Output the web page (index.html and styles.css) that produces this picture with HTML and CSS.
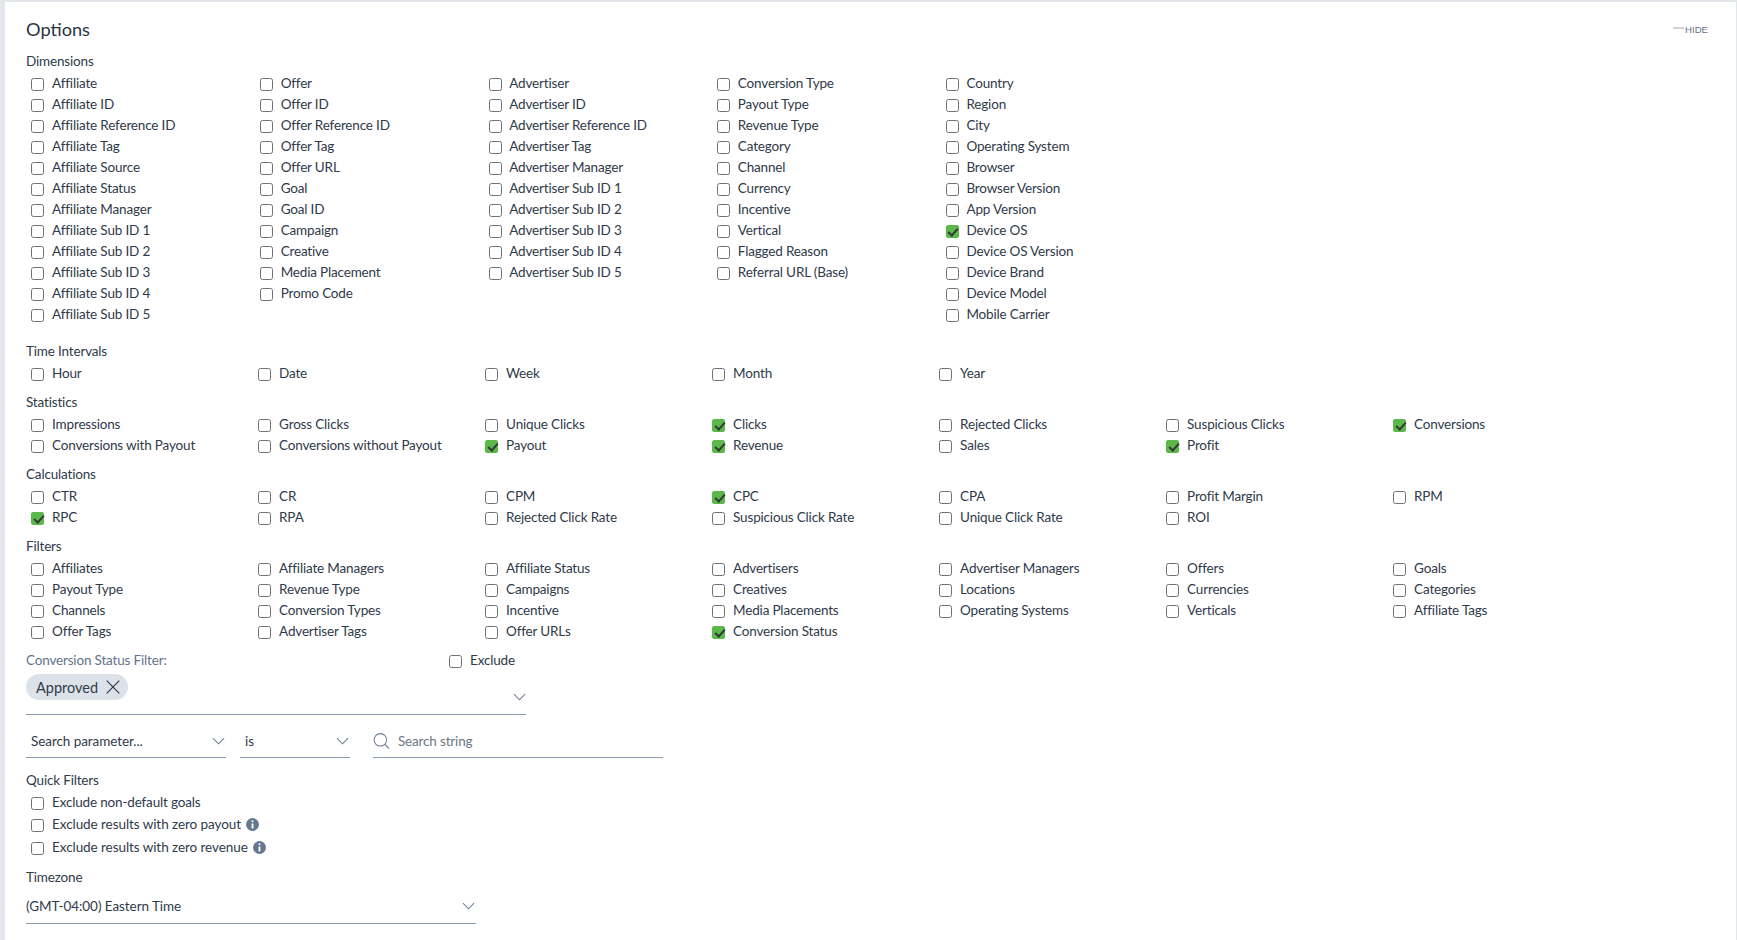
FILE: index.html
```html
<!DOCTYPE html>
<html lang="en">
<head>
<meta charset="utf-8">
<title>Options</title>
<link rel="stylesheet" href="styles.css">
</head>
<body>
<main class="card">
  <header class="card-head">
    <h1 class="title">Options</h1>
    <button class="hide" type="button"><span class="hide-dash"></span>HIDE</button>
  </header>

  <section class="section section-dims">
    <h2 class="label">Dimensions</h2>
    <div class="grid-dims">
      <div class="col">
        <label class="opt"><input type="checkbox">Affiliate</label>
        <label class="opt"><input type="checkbox">Affiliate ID</label>
        <label class="opt"><input type="checkbox">Affiliate Reference ID</label>
        <label class="opt"><input type="checkbox">Affiliate Tag</label>
        <label class="opt"><input type="checkbox">Affiliate Source</label>
        <label class="opt"><input type="checkbox">Affiliate Status</label>
        <label class="opt"><input type="checkbox">Affiliate Manager</label>
        <label class="opt"><input type="checkbox">Affiliate Sub ID 1</label>
        <label class="opt"><input type="checkbox">Affiliate Sub ID 2</label>
        <label class="opt"><input type="checkbox">Affiliate Sub ID 3</label>
        <label class="opt"><input type="checkbox">Affiliate Sub ID 4</label>
        <label class="opt"><input type="checkbox">Affiliate Sub ID 5</label>
      </div>
      <div class="col">
        <label class="opt"><input type="checkbox">Offer</label>
        <label class="opt"><input type="checkbox">Offer ID</label>
        <label class="opt"><input type="checkbox">Offer Reference ID</label>
        <label class="opt"><input type="checkbox">Offer Tag</label>
        <label class="opt"><input type="checkbox">Offer URL</label>
        <label class="opt"><input type="checkbox">Goal</label>
        <label class="opt"><input type="checkbox">Goal ID</label>
        <label class="opt"><input type="checkbox">Campaign</label>
        <label class="opt"><input type="checkbox">Creative</label>
        <label class="opt"><input type="checkbox">Media Placement</label>
        <label class="opt"><input type="checkbox">Promo Code</label>
      </div>
      <div class="col">
        <label class="opt"><input type="checkbox">Advertiser</label>
        <label class="opt"><input type="checkbox">Advertiser ID</label>
        <label class="opt"><input type="checkbox">Advertiser Reference ID</label>
        <label class="opt"><input type="checkbox">Advertiser Tag</label>
        <label class="opt"><input type="checkbox">Advertiser Manager</label>
        <label class="opt"><input type="checkbox">Advertiser Sub ID 1</label>
        <label class="opt"><input type="checkbox">Advertiser Sub ID 2</label>
        <label class="opt"><input type="checkbox">Advertiser Sub ID 3</label>
        <label class="opt"><input type="checkbox">Advertiser Sub ID 4</label>
        <label class="opt"><input type="checkbox">Advertiser Sub ID 5</label>
      </div>
      <div class="col">
        <label class="opt"><input type="checkbox">Conversion Type</label>
        <label class="opt"><input type="checkbox">Payout Type</label>
        <label class="opt"><input type="checkbox">Revenue Type</label>
        <label class="opt"><input type="checkbox">Category</label>
        <label class="opt"><input type="checkbox">Channel</label>
        <label class="opt"><input type="checkbox">Currency</label>
        <label class="opt"><input type="checkbox">Incentive</label>
        <label class="opt"><input type="checkbox">Vertical</label>
        <label class="opt"><input type="checkbox">Flagged Reason</label>
        <label class="opt"><input type="checkbox">Referral URL (Base)</label>
      </div>
      <div class="col">
        <label class="opt"><input type="checkbox">Country</label>
        <label class="opt"><input type="checkbox">Region</label>
        <label class="opt"><input type="checkbox">City</label>
        <label class="opt"><input type="checkbox">Operating System</label>
        <label class="opt"><input type="checkbox">Browser</label>
        <label class="opt"><input type="checkbox">Browser Version</label>
        <label class="opt"><input type="checkbox">App Version</label>
        <label class="opt"><input type="checkbox" checked>Device OS</label>
        <label class="opt"><input type="checkbox">Device OS Version</label>
        <label class="opt"><input type="checkbox">Device Brand</label>
        <label class="opt"><input type="checkbox">Device Model</label>
        <label class="opt"><input type="checkbox">Mobile Carrier</label>
      </div>
    </div>
  </section>

  <section class="section">
    <h2 class="label">Time Intervals</h2>
    <div class="grid-seven">
      <label class="opt"><input type="checkbox">Hour</label>
      <label class="opt"><input type="checkbox">Date</label>
      <label class="opt"><input type="checkbox">Week</label>
      <label class="opt"><input type="checkbox">Month</label>
      <label class="opt"><input type="checkbox">Year</label>
    </div>
  </section>

  <section class="section">
    <h2 class="label">Statistics</h2>
    <div class="grid-seven">
      <label class="opt"><input type="checkbox">Impressions</label>
      <label class="opt"><input type="checkbox">Gross Clicks</label>
      <label class="opt"><input type="checkbox">Unique Clicks</label>
      <label class="opt"><input type="checkbox" checked>Clicks</label>
      <label class="opt"><input type="checkbox">Rejected Clicks</label>
      <label class="opt"><input type="checkbox">Suspicious Clicks</label>
      <label class="opt"><input type="checkbox" checked>Conversions</label>
      <label class="opt"><input type="checkbox">Conversions with Payout</label>
      <label class="opt"><input type="checkbox">Conversions without Payout</label>
      <label class="opt"><input type="checkbox" checked>Payout</label>
      <label class="opt"><input type="checkbox" checked>Revenue</label>
      <label class="opt"><input type="checkbox">Sales</label>
      <label class="opt"><input type="checkbox" checked>Profit</label>
    </div>
  </section>

  <section class="section">
    <h2 class="label">Calculations</h2>
    <div class="grid-seven">
      <label class="opt"><input type="checkbox">CTR</label>
      <label class="opt"><input type="checkbox">CR</label>
      <label class="opt"><input type="checkbox">CPM</label>
      <label class="opt"><input type="checkbox" checked>CPC</label>
      <label class="opt"><input type="checkbox">CPA</label>
      <label class="opt"><input type="checkbox">Profit Margin</label>
      <label class="opt"><input type="checkbox">RPM</label>
      <label class="opt"><input type="checkbox" checked>RPC</label>
      <label class="opt"><input type="checkbox">RPA</label>
      <label class="opt"><input type="checkbox">Rejected Click Rate</label>
      <label class="opt"><input type="checkbox">Suspicious Click Rate</label>
      <label class="opt"><input type="checkbox">Unique Click Rate</label>
      <label class="opt"><input type="checkbox">ROI</label>
    </div>
  </section>

  <section class="section">
    <h2 class="label">Filters</h2>
    <div class="grid-seven">
      <label class="opt"><input type="checkbox">Affiliates</label>
      <label class="opt"><input type="checkbox">Affiliate Managers</label>
      <label class="opt"><input type="checkbox">Affiliate Status</label>
      <label class="opt"><input type="checkbox">Advertisers</label>
      <label class="opt"><input type="checkbox">Advertiser Managers</label>
      <label class="opt"><input type="checkbox">Offers</label>
      <label class="opt"><input type="checkbox">Goals</label>
      <label class="opt"><input type="checkbox">Payout Type</label>
      <label class="opt"><input type="checkbox">Revenue Type</label>
      <label class="opt"><input type="checkbox">Campaigns</label>
      <label class="opt"><input type="checkbox">Creatives</label>
      <label class="opt"><input type="checkbox">Locations</label>
      <label class="opt"><input type="checkbox">Currencies</label>
      <label class="opt"><input type="checkbox">Categories</label>
      <label class="opt"><input type="checkbox">Channels</label>
      <label class="opt"><input type="checkbox">Conversion Types</label>
      <label class="opt"><input type="checkbox">Incentive</label>
      <label class="opt"><input type="checkbox">Media Placements</label>
      <label class="opt"><input type="checkbox">Operating Systems</label>
      <label class="opt"><input type="checkbox">Verticals</label>
      <label class="opt"><input type="checkbox">Affiliate Tags</label>
      <label class="opt"><input type="checkbox">Offer Tags</label>
      <label class="opt"><input type="checkbox">Advertiser Tags</label>
      <label class="opt"><input type="checkbox">Offer URLs</label>
      <label class="opt"><input type="checkbox" checked>Conversion Status</label>
    </div>
  </section>

  <section class="section">
    <div class="status-head">
      <span class="status-label">Conversion Status Filter:</span>
      <label class="opt"><input type="checkbox">Exclude</label>
    </div>
    <div class="multi">
      <span class="chip">Approved
        <svg class="chip-x" viewBox="0 0 14 14" aria-hidden="true"><path d="M.7.7l12.6 12.6M13.3.7L.7 13.3"/></svg>
      </span>
      <svg class="chev multi-chev" viewBox="0 0 14 8" aria-hidden="true"><path d="M1 1l6 6 6-6"/></svg>
    </div>
  </section>

  <div class="search-row">
    <div class="select select-param">
      <span>Search parameter...</span>
      <svg class="chev" viewBox="0 0 14 8" aria-hidden="true"><path d="M1 1l6 6 6-6"/></svg>
    </div>
    <div class="select select-op">
      <span>is</span>
      <svg class="chev" viewBox="0 0 14 8" aria-hidden="true"><path d="M1 1l6 6 6-6"/></svg>
    </div>
    <div class="search">
      <svg class="search-icon" viewBox="0 0 18 18" aria-hidden="true"><circle cx="7.8" cy="7.8" r="6.6"/><path d="M12.6 12.6l4.4 4.4"/></svg>
      <span class="placeholder">Search string</span>
    </div>
  </div>

  <section class="section section-quick">
    <h2 class="label">Quick Filters</h2>
    <label class="opt"><input type="checkbox">Exclude non-default goals</label>
    <label class="opt opt-tall"><input type="checkbox">Exclude results with zero payout
      <svg class="info" viewBox="0 0 14 14" aria-hidden="true"><circle class="info-bg" cx="7" cy="7" r="7"/><circle class="info-fg" cx="7" cy="3.6" r="1.1"/><rect class="info-fg" x="6" y="5.8" width="2" height="5.4" rx=".5"/></svg>
    </label>
    <label class="opt opt-tall"><input type="checkbox">Exclude results with zero revenue
      <svg class="info" viewBox="0 0 14 14" aria-hidden="true"><circle class="info-bg" cx="7" cy="7" r="7"/><circle class="info-fg" cx="7" cy="3.6" r="1.1"/><rect class="info-fg" x="6" y="5.8" width="2" height="5.4" rx=".5"/></svg>
    </label>
  </section>

  <section class="section section-tz">
    <h2 class="label">Timezone</h2>
    <div class="select select-tz">
      <span>(GMT-04:00) Eastern Time</span>
      <svg class="chev" viewBox="0 0 14 8" aria-hidden="true"><path d="M1 1l6 6 6-6"/></svg>
    </div>
  </section>
</main>
</body>
</html>
```
FILE: styles.css
```css
* { box-sizing: border-box; }
html, body { height: 100%; }
body {
  margin: 0;
  padding: 2px 1px 0 5px;
  background: #e3e7eb;
  overflow: hidden;
  font-family: "Lato", "Noto Sans", sans-serif;
  font-size: 13.5px;
  letter-spacing: -0.17px;
  color: #2f3a4a;
}
.card {
  background: #fff;
  height: 100%;
  padding: 15px 0 0 21px;
}
.card-head {
  display: flex;
  justify-content: space-between;
  align-items: center;
  height: 24px;
  margin-bottom: 10px;
}
.title {
  margin: 0;
  font-size: 18.2px;
  font-weight: 400;
  letter-spacing: 0;
  line-height: 23px;
  color: #2a3442;
}
.hide {
  display: flex;
  align-items: center;
  gap: 1.5px;
  margin: 0 28px 0 0;
  padding: 0;
  border: 0;
  background: none;
  font-family: "Liberation Sans", sans-serif;
  font-size: 9.6px;
  letter-spacing: 0;
  color: #6b7485;
}
.hide-dash {
  display: block;
  width: 11px;
  height: 2px;
  background: #d0d4d9;
  position: relative;
  top: -1px;
}
.section { margin-bottom: 8px; }
.section-dims { margin-bottom: 16px; }
.label {
  margin: 0 0 1px;
  font-size: 13.5px;
  font-weight: 400;
  line-height: 21px;
  color: #2f3a4a;
}
.grid-dims {
  display: grid;
  grid-template-columns: repeat(5, 228.6px);
}
.col { display: flex; flex-direction: column; }
.grid-seven {
  display: grid;
  grid-template-columns: repeat(7, 227px);
}
.opt {
  display: flex;
  align-items: center;
  height: 21px;
  padding-left: 5.4px;
  padding-bottom: 1px;
  white-space: nowrap;
}
.opt input {
  appearance: none;
  -webkit-appearance: none;
  flex: none;
  position: relative;
  width: 13px;
  height: 13px;
  margin: 2px 7.7px 0 0;
  border: 1px solid #6f7277;
  border-radius: 2.5px;
  background: #fff;
}
.opt input:checked {
  background: #5cb84a;
  border-color: #5cb84a;
  border-radius: 2px;
}
.opt input:checked::after {
  content: "";
  position: absolute;
  left: 3.4px;
  top: 0.4px;
  width: 4px;
  height: 8px;
  border: solid #2f3a33;
  border-width: 0 2px 2px 0;
  transform: rotate(42deg);
}
.status-head { display: flex; align-items: center; height: 21px; }
.status-label { width: 418px; color: #64748b; padding-bottom: 1px; }
.multi {
  position: relative;
  width: 500px;
  height: 44px;
  padding-top: 3px;
  border-bottom: 1px solid #8c9cb1;
}
.chip {
  display: inline-flex;
  align-items: center;
  gap: 8px;
  height: 26px;
  padding: 0 8px 0 10px;
  border-radius: 13px;
  background: #dde2e8;
  font-size: 14.5px;
  letter-spacing: 0;
}
.chip-x { width: 14px; height: 14px; }
.chip-x path { fill: none; stroke: #2f3a4a; stroke-width: 1.2; }
.chev { width: 13px; height: 8px; flex: none; }
.chev path { fill: none; stroke: #6b7a8f; stroke-width: 1.1; }
.multi-chev { position: absolute; right: 0; top: 22px; }
.search-row {
  display: flex;
  height: 33px;
  margin: 10px 0 12px;
}
.select {
  display: flex;
  align-items: center;
  justify-content: space-between;
  letter-spacing: -0.07px;
  border-bottom: 1px solid #8c9cb1;
}
.select-param { width: 200px; padding: 0 1px 0 5px; margin-right: 14px; }
.select-op { width: 110px; padding: 0 1px 0 5px; margin-right: 23px; }
.search {
  display: flex;
  align-items: center;
  gap: 8px;
  width: 290px;
  border-bottom: 1px solid #8c9cb1;
}
.search-icon { width: 17px; height: 18px; flex: none; }
.search-icon circle, .search-icon path { fill: none; stroke: #6b7a8f; stroke-width: 1.1; }
.placeholder { color: #6c7785; }
.opt-tall { height: 23px; letter-spacing: -0.07px; }
.info { width: 13px; height: 13px; margin-left: 5px; flex: none; }
.info-bg { fill: #66788f; }
.info-fg { fill: #fff; }
.select-tz { width: 450px; height: 35px; padding-right: 1px; }
```
